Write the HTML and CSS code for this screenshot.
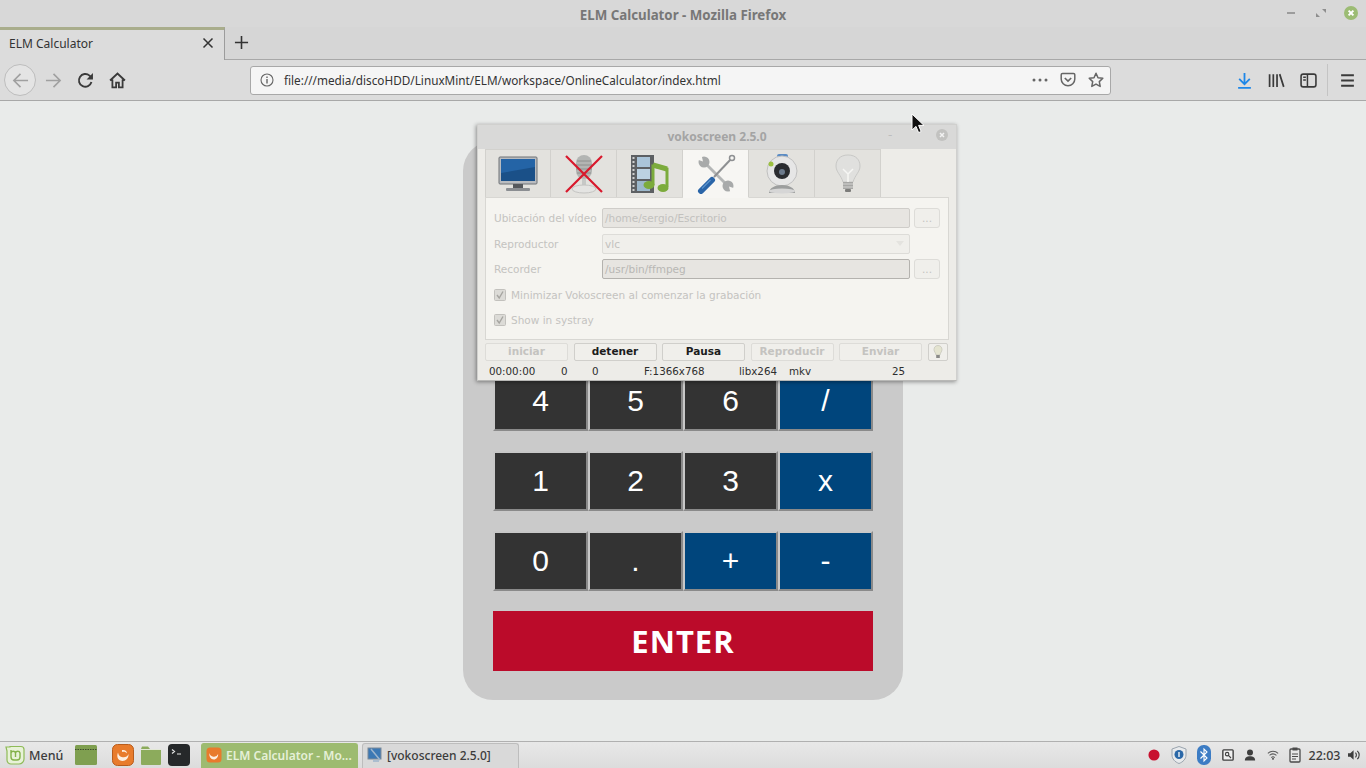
FILE: index.html
```html
<!DOCTYPE html>
<html lang="es">
<head>
<meta charset="utf-8">
<title>ELM Calculator - Mozilla Firefox</title>
<link rel="stylesheet" href="styles.css">
</head>
<body>
<header class="titlebar">
  <span class="titlebar-text">ELM Calculator - Mozilla Firefox</span>
  <div class="wm-buttons">
    <svg class="wm-btn" viewBox="0 0 14 14"><path d="M3 7h8" stroke="#8e8e8e" stroke-width="1.6"/></svg>
    <svg class="wm-btn" viewBox="0 0 14 14"><path d="M8 3h4v4zM6 11H2V7z" fill="#8e8e8e"/></svg>
    <svg class="wm-btn" viewBox="0 0 14 14"><circle cx="7" cy="7" r="7" fill="#9cbc74"/><path d="M4.6 4.6l4.8 4.8M9.4 4.6l-4.8 4.8" stroke="#fff" stroke-width="2"/></svg>
  </div>
</header>
<div class="tabstrip">
  <div class="tab">
    <span class="tab-title">ELM Calculator</span>
    <svg class="tab-close" viewBox="0 0 12 12"><path d="M1.5 1.5l9 9M10.5 1.5l-9 9" stroke="#333" stroke-width="1.5"/></svg>
  </div>
  <svg class="newtab" viewBox="0 0 16 16"><path d="M8 1v14M1 8h14" stroke="#333" stroke-width="1.7"/></svg>
</div>
<nav class="toolbar">
  <div class="tb-btn tb-back"><svg class="ico" viewBox="0 0 18 18"><path d="M17 9H2M9 2L2 9l7 7" fill="none" stroke="#a0a0a0" stroke-width="1.7"/></svg></div>
  <div class="tb-btn"><svg class="ico" viewBox="0 0 18 18"><path d="M1 9h15M9 2l7 7-7 7" fill="none" stroke="#a0a0a0" stroke-width="1.7"/></svg></div>
  <div class="tb-btn"><svg class="ico" viewBox="0 0 16 16"><path d="M13.6 9.5A6 6 0 1 1 11.8 3.4L14 5.5" fill="none" stroke="#3a3a3a" stroke-width="1.8"/><path d="M15 1v6H9z" fill="#3a3a3a"/></svg></div>
  <div class="tb-btn"><svg class="ico" viewBox="0 0 16 16"><path d="M1 8l7-6.500L15 8M3.200 7v7.500h3.500V10h2.600v4.500h3.500V7" fill="none" stroke="#3a3a3a" stroke-width="1.700"/></svg></div>
  <div class="urlbar">
    <svg class="url-info" viewBox="0 0 14 14"><circle cx="7" cy="7" r="6" fill="none" stroke="#666" stroke-width="1.100"/><path d="M7 6v4.500M7 3.400v1.500" stroke="#666" stroke-width="1.400"/></svg>
    <span class="url-text">file:///media/discoHDD/LinuxMint/ELM/workspace/OnlineCalculator/index.html</span>
    <svg class="url-dots" viewBox="0 0 16 4"><circle cx="2" cy="2" r="1.500" fill="#666"/><circle cx="8" cy="2" r="1.500" fill="#666"/><circle cx="14" cy="2" r="1.500" fill="#666"/></svg>
    <svg class="url-ico" viewBox="0 0 16 16"><path d="M2.500 1.500h11a1.300 1.300 0 0 1 1.300 1.300V7a6.800 6.800 0 0 1-13.600 0V2.800a1.300 1.300 0 0 1 1.300-1.300z" fill="none" stroke="#666" stroke-width="1.500"/><path d="M4.800 6L8 9l3.200-3" fill="none" stroke="#666" stroke-width="1.700"/></svg>
    <svg class="url-ico" viewBox="0 0 16 16"><path d="M8 1.300l2 4.400 4.800.6-3.500 3.300.9 4.800L8 12.100l-4.200 2.300.9-4.800L1.200 6.300 6 5.700z" fill="none" stroke="#666" stroke-width="1.500" stroke-linejoin="round"/></svg>
  </div>
  <div class="tb-btn tb-download"><svg class="ico" viewBox="0 0 16 16"><path d="M8 1v10M3 6.500L8 11.500l5-5M2 15h12" fill="none" stroke="#1e87e8" stroke-width="1.700"/></svg></div>
  <div class="tb-btn"><svg class="ico" viewBox="0 0 16 16"><path d="M1.500 2v12M5 2v12M8.500 2v12M11 2l3.800 12" fill="none" stroke="#3a3a3a" stroke-width="1.600"/></svg></div>
  <div class="tb-btn"><svg class="ico" viewBox="0 0 16 16"><rect x="1" y="2" width="14" height="12" rx="2" fill="none" stroke="#3a3a3a" stroke-width="1.500"/><path d="M7 2v12M3 5h2.500M3 7.500h2.500" stroke="#3a3a3a" stroke-width="1.400"/></svg></div>
  <span class="tb-sep"></span>
  <div class="tb-btn"><svg class="ico" viewBox="0 0 16 16"><path d="M2 3h12M2 8h12M2 13h12" stroke="#3a3a3a" stroke-width="1.800"/></svg></div>
</nav>

<main class="page">
  <section class="calc">
    <div class="calc-hidden"></div>
    <div class="keys">
      <button class="key">4</button><button class="key">5</button><button class="key">6</button><button class="key key-op">/</button>
      <button class="key">1</button><button class="key">2</button><button class="key">3</button><button class="key key-op">x</button>
      <button class="key">0</button><button class="key">.</button><button class="key key-op">+</button><button class="key key-op">-</button>
    </div>
    <button class="enter">ENTER</button>
  </section>
</main>

<section class="voko">
  <div class="voko-title">
    <span class="voko-title-text">vokoscreen 2.5.0</span>
    <span class="voko-min">-</span>
    <svg class="voko-close" viewBox="0 0 12 12"><circle cx="6" cy="6" r="6" fill="#c2c2c0"/><path d="M4 4l4 4M8 4l-4 4" stroke="#f2f2f2" stroke-width="1.500"/></svg>
  </div>
  <div class="voko-tabs">
    <div class="vtab">
      <svg class="vtab-ico" viewBox="0 0 40 36"><rect x="1" y="1" width="38" height="27" rx="1" fill="#b9bcc0" stroke="#6f7276"/><rect x="3" y="3" width="34" height="22" fill="#1a5088"/><path d="M3 3h34v8L3 17z" fill="#2464a6"/><rect x="15" y="28" width="10" height="4" fill="#55585c"/><rect x="8" y="32" width="24" height="3" rx="1" fill="#8b8e92"/></svg>
    </div>
    <div class="vtab">
      <svg class="vtab-ico" viewBox="0 0 40 40"><rect x="12" y="1" width="16" height="24" rx="8" fill="#b3b5b3"/><path d="M13 7h14M12 11h16M12 15h16M13 19h14" stroke="#8e908e"/><rect x="18" y="25" width="4" height="7" fill="#c6c8c6"/><ellipse cx="20" cy="35" rx="12" ry="4" fill="#e4e4e2" stroke="#c4c4c2"/><path d="M2 2l36 36M38 2L2 38" stroke="#d8182c" stroke-width="2.200"/></svg>
    </div>
    <div class="vtab">
      <svg class="vtab-ico" viewBox="0 0 40 40"><rect x="1" y="1" width="23" height="38" fill="#5d6063"/><rect x="7" y="3" width="13" height="10" fill="#aac4d8"/><rect x="7" y="15" width="13" height="10" fill="#bcd2e2"/><rect x="7" y="27" width="13" height="10" fill="#9cb8cc"/><path d="M3.500 3v34" stroke="#d0d0d0" stroke-width="2" stroke-dasharray="2 2"/><path d="M23 31V12l14 3v18" fill="none" stroke="#7cab3c" stroke-width="3"/><path d="M23 11l14 4" stroke="#7cab3c" stroke-width="5"/><ellipse cx="19" cy="31" rx="5.500" ry="4" fill="#7cab3c"/><ellipse cx="33" cy="34" rx="5.500" ry="4" fill="#7cab3c"/></svg>
    </div>
    <div class="vtab vtab-active">
      <svg class="vtab-ico" viewBox="0 0 40 40">
        <path d="M8 8l24 24" stroke="#b4b6b6" stroke-width="2.800"/>
        <circle cx="8" cy="8" r="5.500" fill="#a8aaaa"/><path d="M1 5.500L7 7.500 5.500 1z" fill="#f7f6f3"/>
        <circle cx="32" cy="32" r="5.500" fill="#a8aaaa"/><path d="M39 34.500L33 32.500 34.500 39z" fill="#f7f6f3"/>
        <path d="M36 4L18 23" stroke="#8e9092" stroke-width="2"/>
        <circle cx="36" cy="4" r="2.500" fill="#f7f6f3" stroke="#8e9092" stroke-width="1.500"/>
        <path d="M16 26L5 37" stroke="#2a65a8" stroke-width="6" stroke-linecap="round"/>
        <path d="M14.500 26L6 34.500" stroke="#5c94cc" stroke-width="1.200"/>
      </svg>
    </div>
    <div class="vtab">
      <svg class="vtab-ico" viewBox="0 0 40 40"><rect x="15" y="0" width="11" height="5" rx="2" fill="#5b8cc4"/><circle cx="20" cy="17" r="15" fill="#e6e6e6" stroke="#c0c0c0"/><circle cx="20" cy="17" r="8" fill="#2a2c30"/><circle cx="20" cy="18" r="3" fill="#6c7a8c"/><circle cx="9" cy="10" r="2.500" fill="#9cc040"/><path d="M7 39c0-5 6-8 13-8s13 3 13 8z" fill="#9c9e9e"/><ellipse cx="20" cy="37" rx="13" ry="2.500" fill="#d6d6d6"/></svg>
    </div>
    <div class="vtab">
      <svg class="vtab-ico" viewBox="0 0 40 40"><path d="M20 1c-8 0-12 5-12 11 0 6 5 9 7 16h10c2-7 7-10 7-16 0-6-4-11-12-11z" fill="#e0e0de" stroke="#c8c8c6"/><path d="M15 15l5 5 5-5M20 20v8" fill="none" stroke="#f6f6f4" stroke-width="1.500"/><rect x="15" y="28" width="10" height="7" fill="#a6a6a4"/><path d="M15 30h10M15 33h10" stroke="#d4d4d2"/><rect x="17" y="35" width="6" height="3" rx="1" fill="#7c7c7a"/></svg>
    </div>
  </div>
  <div class="voko-pane">
    <div class="vrow">
      <span class="vlabel">Ubicación del vídeo</span>
      <span class="vfield">/home/sergio/Escritorio</span>
      <span class="vdots">...</span>
    </div>
    <div class="vrow">
      <span class="vlabel">Reproductor</span>
      <span class="vfield vcombo">vlc<svg class="varrow" viewBox="0 0 8 5"><path d="M0 0h8L4 5z" fill="#e4e3df"/></svg></span>
    </div>
    <div class="vrow">
      <span class="vlabel">Recorder</span>
      <span class="vfield vfield-dark">/usr/bin/ffmpeg</span>
      <span class="vdots">...</span>
    </div>
    <div class="vrow vrow-check">
      <svg class="vcheck" viewBox="0 0 12 12"><rect x=".5" y=".5" width="11" height="11" rx="1" fill="#dcdbd7" stroke="#c2c1bd"/><path d="M3 6l2.200 3L9 2.500" fill="none" stroke="#a6a5a1" stroke-width="1.400"/></svg>
      <span class="vlabel">Minimizar Vokoscreen al comenzar la grabación</span>
    </div>
    <div class="vrow vrow-check">
      <svg class="vcheck" viewBox="0 0 12 12"><rect x=".5" y=".5" width="11" height="11" rx="1" fill="#dcdbd7" stroke="#c2c1bd"/><path d="M3 6l2.200 3L9 2.500" fill="none" stroke="#a6a5a1" stroke-width="1.400"/></svg>
      <span class="vlabel">Show in systray</span>
    </div>
  </div>
  <div class="voko-actions">
    <span class="vbtn vbtn-off">iniciar</span>
    <span class="vbtn">detener</span>
    <span class="vbtn">Pausa</span>
    <span class="vbtn vbtn-off">Reproducir</span>
    <span class="vbtn vbtn-off">Enviar</span>
    <span class="vbtn vbtn-bulb"><svg class="vbulb" viewBox="0 0 10 14"><path d="M5 .5C2.500.5 1 2.300 1 4.500 1 6.500 2.500 7.500 3 10h4c.5-2.500 2-3.500 2-5.500C9 2.300 7.500.5 5 .5z" fill="#e4e4d0" stroke="#bcbcb0" stroke-width=".6"/><rect x="3.200" y="10" width="3.600" height="3" fill="#8a8a88"/></svg></span>
  </div>
  <div class="voko-status">
    <span>00:00:00</span><span>0</span><span>0</span><span>F:1366x768</span><span>libx264</span><span>mkv</span><span>25</span>
  </div>
</section>

<svg class="cursor" viewBox="0 0 14 21"><path d="M1 1v16l4-3.600 2.600 6.200 2.600-1.100L7.600 12.400H13z" fill="#111" stroke="#fff" stroke-width="1"/></svg>

<footer class="taskbar">
  <div class="menu-btn">
    <svg class="tk-ico" viewBox="0 0 20 20"><path d="M1 2h4v-.5h11a3 3 0 0 1 3 3V14a5 5 0 0 1-5 5H6a4 4 0 0 1-4-4V6z" fill="#e8f2d8" stroke="#8fbb58" stroke-width="1.200"/><path d="M6 5v7a3 3 0 0 0 3 3h3a3 3 0 0 0 3-3V8a2.300 2.300 0 0 0-4.500 0v4M10.500 8a2.300 2.300 0 0 0-4.500 0" fill="none" stroke="#84b24c" stroke-width="1.400"/></svg>
    <span class="menu-text">Menú</span>
  </div>
  <div class="launchers">
    <svg class="launcher launcher-first" viewBox="0 0 22 20"><rect x="0" y="0" width="22" height="20" rx="1.500" fill="#7f9f50"/><path d="M0 4.500h22" stroke="#3f4d2c" stroke-dasharray="1.500 1"/></svg>
    <svg class="launcher launcher-ff" viewBox="0 0 22 22"><rect x=".5" y=".5" width="21" height="21" rx="5" fill="#e87b2c" stroke="#b85c1c"/><path d="M6 8.500a5.500 5.500 0 0 0 10.500 1.500c.3 4-2.500 7-6 7-4 0-6.500-4-4.500-8.500z M10 6c3-.5 5 1 5 3.500-1-1.200-2.500-2-5-1.500z" fill="#fdeee0"/></svg>
    <svg class="launcher" viewBox="0 0 22 20"><path d="M1 4l1-2.500h6L10 4h11v15a1 1 0 0 1-1 1H2a1 1 0 0 1-1-1z" fill="#8cab5c"/><path d="M1 4.500h20" stroke="#e3e8d6"/></svg>
    <svg class="launcher" viewBox="0 0 22 22"><rect width="22" height="22" rx="4" fill="#26282a"/><path d="M4 5.500l2.500 2-2.500 2M9 10h4" fill="none" stroke="#e4e4e4" stroke-width="1.200"/></svg>
  </div>
  <div class="winbtn winbtn-active">
    <svg class="win-ico" viewBox="0 0 16 16"><rect x=".5" y=".5" width="15" height="15" rx="3.500" fill="#e87b2c"/><path d="M3.500 6a4.500 4.500 0 0 0 8.600 1c.3 3-1.800 5.500-4.300 5.500-3 0-5-3-4.300-6.500z" fill="#fdeee0"/></svg>
    <span class="win-text">ELM Calculator - Mo...</span>
  </div>
  <div class="winbtn">
    <svg class="win-ico" viewBox="0 0 16 16"><rect x="1" y="1" width="13" height="11" fill="#3c78b4" stroke="#7c8a98"/><path d="M4 2l9 11M6 14h6" stroke="#9cb4cc" stroke-width="1.500"/></svg>
    <span class="win-text">[vokoscreen 2.5.0]</span>
  </div>
  <div class="tray">
    <svg class="tray-ico" viewBox="0 0 14 14"><circle cx="7" cy="7" r="6.500" fill="#c8102e"/></svg>
    <svg class="tray-ico tray-shield" viewBox="0 0 16 18"><path d="M8 .5l7 2.500v6c0 4-3 7-7 8.500-4-1.500-7-4.500-7-8.500V3z" fill="#e8eaec" stroke="#9aa4ae"/><circle cx="8" cy="8.500" r="4.500" fill="#2a68a8"/><path d="M8 6v5" stroke="#fff" stroke-width="1.300"/></svg>
    <svg class="tray-ico tray-bt" viewBox="0 0 14 20"><rect x="0" y="0" width="14" height="20" rx="6.500" fill="#3c7cc4"/><path d="M3.500 6.500L10 13l-3 3V4l3 3-6.500 6.500" fill="none" stroke="#fff" stroke-width="1.100"/></svg>
    <svg class="tray-ico" viewBox="0 0 14 14"><rect x="1" y="1" width="12" height="12" rx="1" fill="#f0f0f0" stroke="#3e3e3e" stroke-width="1.600"/><circle cx="6" cy="6" r="2" fill="none" stroke="#3e3e3e" stroke-width="1.300"/><path d="M7.500 7.500l3 3" stroke="#3e3e3e" stroke-width="1.300"/></svg>
    <svg class="tray-ico" viewBox="0 0 14 14"><circle cx="7" cy="4" r="3.500" fill="#3e3e3e"/><path d="M1 13.500c0-3.500 2.500-5 6-5s6 1.500 6 5z" fill="#3e3e3e"/></svg>
    <svg class="tray-ico" viewBox="0 0 14 12"><path d="M1 4a9 9 0 0 1 12 0M3 6.500a6 6 0 0 1 8 0M5 9a3 3 0 0 1 4 0" fill="none" stroke="#5a5a5a" stroke-width="1.200"/><circle cx="7" cy="10.500" r="1.200" fill="#5a5a5a"/></svg>
    <svg class="tray-ico tray-clip" viewBox="0 0 12 16"><rect x="1" y="2" width="10" height="13" rx="1" fill="#e6e6e6" stroke="#4a4a4a" stroke-width="1.300"/><rect x="3.500" y=".5" width="5" height="3" fill="#4a4a4a"/><path d="M3 7h6M3 9.500h6M3 12h4" stroke="#4a4a4a"/></svg>
    <span class="clock">22:03</span>
    <svg class="tray-ico tray-vol" viewBox="0 0 14 12"><path d="M0 4h2.500L6 1v10L2.500 8H0z" fill="#3e3e3e"/><path d="M8 3.500a3.500 3.500 0 0 1 0 5M10 1.500a6 6 0 0 1 0 9" fill="none" stroke="#3e3e3e" stroke-width="1.200"/></svg>
  </div>
</footer>
</body>
</html>
```

FILE: styles.css
```css
* { box-sizing: border-box; }
html, body { margin: 0; padding: 0; height: 100%; }
body {
  display: flex;
  flex-direction: column;
  height: 768px;
  overflow: hidden;
  position: relative;
  background: #e9ebea;
  font-family: "Noto Sans", sans-serif;
  color: #333;
}

/* window chrome */
.titlebar {
  height: 27px;
  flex: none;
  background: #d8d8d8;
  display: flex;
  align-items: center;
  justify-content: center;
  position: relative;
}
.titlebar-text { font-size: 13.300px; font-weight: 700; color: #777; position: relative; top: 1px; }
.wm-buttons {
  position: absolute;
  right: 8px;
  top: 6px;
  display: flex;
  gap: 16px;
}
.wm-btn { width: 14px; height: 14px; display: block; }

.tabstrip {
  height: 33px;
  flex: none;
  background: #d6d6d6;
  border-bottom: 1px solid #a8a8a8;
  display: flex;
  align-items: stretch;
}
.tab {
  width: 225px;
  height: 33px;
  background: #dcdcdc;
  border-top: 3px solid #a9ad8c;
  border-right: 1px solid #9c9c9c;
  display: flex;
  align-items: center;
  padding: 0 10px 4px 9px;
  justify-content: space-between;
}
.tab-title { font-size: 12px; color: #333; }
.tab-close { width: 12px; height: 12px; }
.newtab { width: 15px; height: 15px; margin: 8px 0 0 9px; }

.toolbar {
  height: 41px;
  flex: none;
  background: #dcdcdc;
  border-bottom: 1px solid #a8a8a8;
  display: flex;
  align-items: center;
  padding-left: 4px;
}
.tb-btn {
  width: 32px;
  height: 32px;
  flex: none;
  display: flex;
  align-items: center;
  justify-content: center;
}
.tb-back {
  border: 1px solid #bdbdbd;
  border-radius: 50%;
  background: #e4e4e4;
  margin-right: 1px;
}
.ico { width: 17px; height: 17px; display: block; }
.urlbar {
  width: 861px;
  height: 29px;
  flex: none;
  margin-left: 117px;
  background: #f5f5f5;
  border: 1px solid #a8a8a8;
  border-radius: 3px;
  display: flex;
  align-items: center;
  padding: 0 6px 0 9px;
}
.url-info { width: 14px; height: 14px; flex: none; }
.url-text { font-size: 11.750px; color: #333; margin-left: 10px; flex: 1; white-space: nowrap; }
.url-dots { width: 16px; height: 4px; flex: none; margin-right: 12px; }
.url-ico { width: 16px; height: 16px; flex: none; }
.url-dots + .url-ico { margin-right: 12px; }
.tb-download { margin-left: 117px; }
.tb-sep { width: 1px; height: 32px; background: #c4c4c4; margin: 0 3px 0 3px; flex: none; }

/* page */
.page {
  flex: 1;
  display: flex;
  justify-content: center;
  align-items: flex-start;
  padding-top: 40px;
  background: #e9ebea;
}
.calc {
  width: 440px;
  height: 559px;
  background: #cacaca;
  border-radius: 30px;
  padding: 30px;
}
.calc-hidden { height: 200px; }
.keys {
  display: grid;
  grid-template-columns: repeat(4, 95px);
  grid-auto-rows: 60px;
  row-gap: 20px;
}
.key {
  background: #333;
  color: #fff;
  font-family: "Liberation Sans", Arial, sans-serif;
  font-size: 30px;
  border: 2px solid;
  border-color: #c8c8c8 #8a8a8a #8a8a8a #c8c8c8;
  padding: 0;
}
.key-op { background: #00457c; }
.enter {
  display: block;
  width: 380px;
  height: 60px;
  margin-top: 20px;
  background: #bb0b2a;
  color: #fff;
  border: 0;
  padding: 0;
  font-family: "Open Sans", sans-serif;
  font-weight: 700;
  font-size: 31px;
  letter-spacing: 1px;
}

/* vokoscreen window, floating over the page */
.voko {
  position: absolute;
  left: 477px;
  top: 124px;
  width: 480px;
  height: 257px;
  background: #edece8;
  border: 1px solid #d0d0ce;
  border-bottom-color: #b8b8b6;
  box-shadow: -1px 1px 4px rgba(0, 0, 0, .4);
  font-family: "DejaVu Sans", sans-serif;
  display: flex;
  flex-direction: column;
}
.voko-title {
  height: 24px;
  flex: none;
  background: #d9d9d8;
  display: flex;
  align-items: center;
  justify-content: center;
  padding-bottom: 2px;
  position: relative;
}
.voko-title-text { font-family: "Noto Sans", sans-serif; font-size: 12px; font-weight: 700; color: #a4a4a4; }
.voko-min { position: absolute; left: 410px; top: 3px; font-size: 12px; color: #bdbdbd; }
.voko-close { position: absolute; left: 458px; top: 4px; width: 12px; height: 12px; }
.voko-tabs {
  height: 48px;
  flex: none;
  display: flex;
  padding-left: 7px;
}
.vtab {
  width: 66px;
  height: 49px;
  background: #e3e2de;
  border: 1px solid #d2d1cd;
  border-left-width: 0;
  display: flex;
  align-items: center;
  justify-content: center;
}
.vtab:first-child { border-left-width: 1px; }
.vtab-active { background: #f7f6f3; border-bottom-color: #f7f6f3; position: relative; z-index: 1; }
.vtab-ico { width: 40px; height: 40px; display: block; }
.voko-pane {
  width: 464px;
  height: 143px;
  flex: none;
  margin-left: 7px;
  background: #f5f4f0;
  border: 1px solid #d8d7d3;
  padding: 7.500px 0 0 8px;
}
.vrow {
  height: 25.500px;
  display: flex;
  align-items: center;
  font-size: 10.500px;
  color: #c4c3c0;
}
.vlabel { width: 108px; flex: none; white-space: nowrap; }
.vfield {
  width: 308px;
  height: 20px;
  flex: none;
  background: #e7e5e1;
  border: 1px solid #cfcdc9;
  border-radius: 2px;
  padding: 0 2px;
  line-height: 18px;
  color: #c2c1be;
}
.vcombo {
  background: #f0efeb;
  border-color: #dddcd8;
  display: flex;
  align-items: center;
  justify-content: space-between;
  padding-right: 5px;
}
.varrow { width: 8px; height: 5px; }
.vfield-dark { border-color: #b4b2ae; color: #b8b7b4; }
.vdots {
  width: 26px;
  height: 20px;
  margin-left: 4px;
  border: 1px solid #dddcd8;
  border-radius: 3px;
  background: #f0efeb;
  text-align: center;
  line-height: 18px;
}
.vrow-check .vlabel { width: auto; }
.vcheck { width: 12px; height: 12px; flex: none; margin-right: 5px; }
.voko-actions {
  display: flex;
  gap: 5.500px;
  padding: 3px 8px 0 7px;
  height: 21px;
  flex: none;
}
.vbtn {
  width: 83px;
  height: 18px;
  flex: none;
  border: 1px solid #d0cfcb;
  border-radius: 2px;
  background: #f0efeb;
  font-size: 10.500px;
  font-weight: 700;
  color: #1c1c1c;
  text-align: center;
  line-height: 15px;
}
.vbtn-off { color: #c4c3c0; border-color: #dddcd8; }
.vbtn-bulb { width: 20px; display: flex; align-items: center; justify-content: center; }
.vbulb { width: 10px; height: 14px; }
.voko-status {
  display: grid;
  grid-template-columns: 72px 31px 52px 95px 50px 103px auto;
  padding: 4px 0 0 11px;
  font-size: 10.300px;
  color: #2e2e2e;
}

.cursor {
  position: absolute;
  left: 911px;
  top: 113px;
  width: 14px;
  height: 21px;
}

/* panel */
.taskbar {
  height: 27px;
  flex: none;
  background: linear-gradient(#e8e8e8, #dcdcdc);
  border-top: 1px solid #b0b0b0;
  display: flex;
  align-items: center;
}
.menu-btn { display: flex; align-items: center; padding-left: 5px; width: 75px; flex: none; }
.tk-ico { width: 20px; height: 20px; flex: none; }
.menu-text { font-size: 12.500px; font-weight: 500; color: #3c3c3c; margin-left: 4px; }
.launchers { display: flex; align-items: center; gap: 6px; width: 126px; flex: none; }
.launcher { width: 22px; height: 22px; flex: none; }
.launcher-first { margin-right: 9px; }
.winbtn {
  width: 157px;
  height: 25px;
  flex: none;
  margin-right: 4px;
  display: flex;
  align-items: center;
  padding: 0 0 2px 4px;
  background: #d9d9d9;
  border: 1px solid #bdbdbd;
  border-bottom: 0;
  border-radius: 3px 3px 0 0;
  align-self: flex-end;
}
.winbtn-active { background: #9dbb70; border-color: #9dbb70; }
.win-ico { width: 16px; height: 16px; flex: none; }
.win-text { font-size: 12px; font-weight: 500; color: #3c3c3c; margin-left: 4px; white-space: nowrap; }
.winbtn-active .win-text { color: #e6f0d8; font-weight: 600; }
.tray {
  margin-left: auto;
  display: flex;
  align-items: center;
  gap: 10.500px;
  padding-right: 5px;
}
.tray-ico { width: 12px; height: 12px; flex: none; }
.tray-shield { width: 16px; height: 18px; }
.tray-bt { width: 14px; height: 20px; }
.tray-clip { height: 16px; }
.tray-vol { width: 13px; }
.clock { font-size: 12.500px; font-weight: 500; color: #3c3c3c; margin: 0 -3px 0 -3.500px; }
```
